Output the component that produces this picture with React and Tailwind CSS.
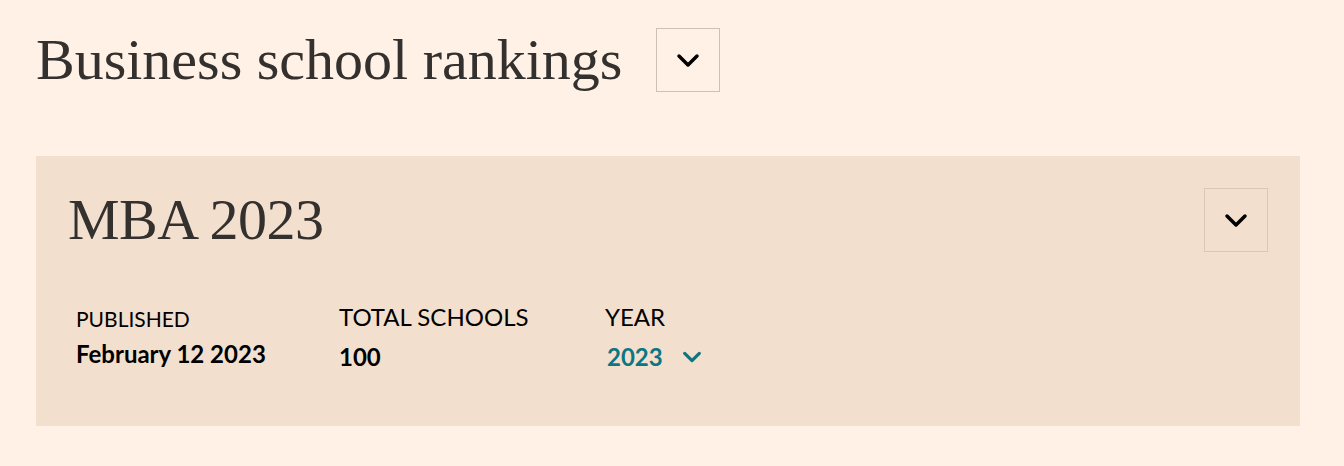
import React from 'react';

function Chevron({ className = '', d = 'M3 8l9 9 9-9', sw = 3.5 }) {
  return (
    <svg viewBox="0 0 24 24" className={className} fill="none" stroke="currentColor" strokeWidth={sw} strokeLinecap="round" strokeLinejoin="round">
      <path d={d} />
    </svg>
  );
}

export default function App() {
  const serif = { fontFamily: '"Liberation Serif", "DejaVu Serif", serif' };
  const sans = { fontFamily: 'Lato, "Open Sans", sans-serif' };

  return (
    <div className="min-h-[466px] w-[1344px] bg-[#fff1e5] text-[#33302e] pt-[28px]">
      {/* Page header */}
      <div className="flex items-center gap-[34px] px-[36px]">
        <h1 style={serif} className="text-[58px] leading-[64px]">Business school rankings</h1>
        <button className="w-[64px] h-[64px] border border-[#ccc1b7] flex items-center justify-center text-black">
          <Chevron className="w-[24px] h-[24px]" />
        </button>
      </div>

      {/* Ranking panel */}
      <div className="ml-[36px] mt-[64px] w-[1264px] h-[270px] bg-[#f2dfce] px-[32px] pt-[32px]">
        <div className="flex items-start justify-between">
          <h2 style={serif} className="text-[58px] leading-[64px] tracking-[-0.5px]">MBA 2023</h2>
          <button className="w-[64px] h-[64px] border border-[#d9c8b8] flex items-center justify-center text-black">
            <Chevron className="w-[24px] h-[24px]" />
          </button>
        </div>

        <div style={sans} className="flex ml-[8px] mt-[51px] text-black">
          <div className="w-[263px]">
            <div className="text-[21px] leading-[28px] pt-[2px] h-[28px]">PUBLISHED</div>
            <div className="text-[24px] leading-[28px] font-bold mt-[9px]">February 12 2023</div>
          </div>
          <div className="w-[266px]">
            <div className="text-[24px] leading-[28px]">TOTAL SCHOOLS</div>
            <div className="text-[24px] leading-[28px] font-bold mt-[12px]">100</div>
          </div>
          <div>
            <div className="text-[24px] leading-[28px]">YEAR</div>
            <button className="flex items-center gap-[18px] mt-[12px] pl-[2px] text-[#0d7680] text-[24px] leading-[28px] font-bold">
              2023
              <Chevron className="w-[22px] h-[22px]" d="M4 8l8 8 8-8" sw={3.5} />
            </button>
          </div>
        </div>
      </div>
    </div>
  );
}
